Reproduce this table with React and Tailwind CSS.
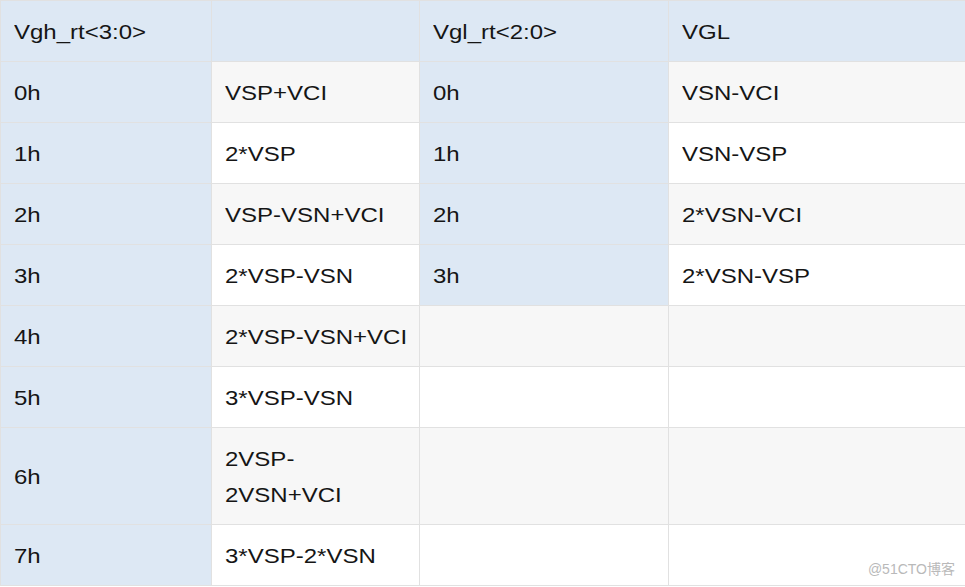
import React from "react";

const rows = [
  ["0h", "VSP+VCI", "0h", "VSN-VCI"],
  ["1h", "2*VSP", "1h", "VSN-VSP"],
  ["2h", "VSP-VSN+VCI", "2h", "2*VSN-VCI"],
  ["3h", "2*VSP-VSN", "3h", "2*VSN-VSP"],
  ["4h", "2*VSP-VSN+VCI", "", ""],
  ["5h", "3*VSP-VSN", "", ""],
  ["6h", "2VSP-\n2VSN+VCI", "", ""],
  ["7h", "3*VSP-2*VSN", "", ""],
];

const cell = "border border-[#e1e1e1] px-[13px] pt-[13px] pb-[11px] text-left align-middle font-normal leading-[36px] whitespace-pre-line";

// the source glyphs are drawn wider than Arial at this size
const Txt = ({ children }) => (
  <span className="inline-block origin-left scale-x-[1.143]">{children}</span>
);

export default function App() {
  return (
    <div className="relative w-[965px] h-[587px] bg-white overflow-hidden" style={{ fontFamily: '"Liberation Sans", Arial, sans-serif' }}>
      <table className="w-[965px] border-collapse table-fixed text-[21px] text-[#151515]">
        <colgroup>
          <col className="w-[211px]" />
          <col className="w-[208px]" />
          <col className="w-[249px]" />
          <col className="w-[297px]" />
        </colgroup>
        <thead>
          <tr className="bg-[#dde8f4]">
            <th className={cell}><Txt>Vgh_rt&lt;3:0&gt;</Txt></th>
            <th className={cell}></th>
            <th className={cell}><Txt>Vgl_rt&lt;2:0&gt;</Txt></th>
            <th className={cell}><Txt>VGL</Txt></th>
          </tr>
        </thead>
        <tbody>
          {rows.map((r, i) => {
            const rowBg = i % 2 === 0 ? "bg-[#f7f7f7]" : "bg-white";
            return (
              <tr key={i}>
                <td className={`${cell} bg-[#dde8f4]`}><Txt>{r[0]}</Txt></td>
                <td className={`${cell} ${rowBg}`}><Txt>{r[1]}</Txt></td>
                <td className={`${cell} ${i < 4 ? "bg-[#dde8f4]" : rowBg}`}><Txt>{r[2]}</Txt></td>
                <td className={`${cell} ${rowBg}`}><Txt>{r[3]}</Txt></td>
              </tr>
            );
          })}
        </tbody>
      </table>
      <div
        className="absolute right-[10px] bottom-[7px] text-[14px] text-[#b9b9b9]"
        style={{ fontFamily: '"Liberation Sans", "Noto Sans CJK SC", sans-serif' }}
      >
        @51CTO博客
      </div>
    </div>
  );
}
